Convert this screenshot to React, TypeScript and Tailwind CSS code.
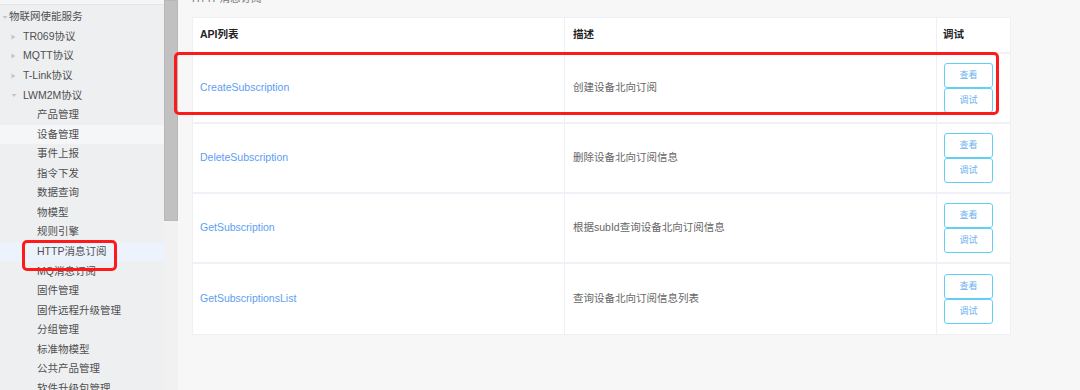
import React from "react"

const menu: { label: string; level: number; arrow?: "right" | "down"; bg?: string }[] = [
  { label: "物联网使能服务", level: 0, arrow: "down" },
  { label: "TR069协议", level: 1, arrow: "right" },
  { label: "MQTT协议", level: 1, arrow: "right" },
  { label: "T-Link协议", level: 1, arrow: "right" },
  { label: "LWM2M协议", level: 1, arrow: "down" },
  { label: "产品管理", level: 2 },
  { label: "设备管理", level: 2, bg: "bg-[#f5f6f8]" },
  { label: "事件上报", level: 2 },
  { label: "指令下发", level: 2 },
  { label: "数据查询", level: 2 },
  { label: "物模型", level: 2 },
  { label: "规则引擎", level: 2 },
  { label: "HTTP消息订阅", level: 2, bg: "bg-[#edf3fc]" },
  { label: "MQ消息订阅", level: 2 },
  { label: "固件管理", level: 2 },
  { label: "固件远程升级管理", level: 2 },
  { label: "分组管理", level: 2 },
  { label: "标准物模型", level: 2 },
  { label: "公共产品管理", level: 2 },
  { label: "软件升级包管理", level: 2 },
]

const apis = [
  { name: "CreateSubscription", desc: "创建设备北向订阅" },
  { name: "DeleteSubscription", desc: "删除设备北向订阅信息" },
  { name: "GetSubscription", desc: "根据subId查询设备北向订阅信息" },
  { name: "GetSubscriptionsList", desc: "查询设备北向订阅信息列表" },
]

function Arrow({ dir }: { dir: "right" | "down" }) {
  return dir === "right" ? (
    <svg width="5" height="6" viewBox="0 0 5 6" className="shrink-0">
      <path d="M0.5 0.5 L4.5 3 L0.5 5.5 Z" fill="#c4c6ca" />
    </svg>
  ) : (
    <svg width="6" height="5" viewBox="0 0 6 5" className="shrink-0">
      <path d="M0.5 1 L5.5 1 L3 4 Z" fill="#c4c6ca" />
    </svg>
  )
}

function Sidebar() {
  return (
    <div className="w-[164px] shrink-0 bg-[#eeeff1] h-[390px] overflow-hidden">
      <div className="h-[5px] bg-[#f4f5f6] border-b border-[#e3e4e6]" />
      <div className="pt-[2.5px]">
        {menu.map((m) => (
          <div
            key={m.label}
            className={`h-[19.55px] flex items-center text-[10.5px] text-[#4f4f4f] whitespace-nowrap ${m.bg ?? ""}`}
          >
            {m.level === 0 && (
              <div className="flex items-center">
                <div className="w-[9px] flex justify-center"><Arrow dir="down" /></div>
                <span>{m.label}</span>
              </div>
            )}
            {m.level === 1 && (
              <div className="flex items-center pl-[10px]">
                <div className="w-[13px] flex justify-start pl-[1px]"><Arrow dir={m.arrow!} /></div>
                <span>{m.label}</span>
              </div>
            )}
            {m.level === 2 && <span className="pl-[37px]">{m.label}</span>}
          </div>
        ))}
      </div>
    </div>
  )
}

function Scrollbar() {
  return (
    <div className="w-[14px] shrink-0 bg-[#f1f1f1] h-[390px]">
      <div className="h-[221px] bg-[#c1c1c1] border border-[#b8b8b8]" />
    </div>
  )
}

function DebugButton({ label }: { label: string }) {
  return (
    <div className="w-[49px] h-[25px] border border-[#62cff6] rounded-[3px] bg-white flex items-center justify-center text-[9px] text-[#6ab2f0]">
      {label}
    </div>
  )
}

export default function App() {
  return (
    <div
      className="relative w-[1080px] h-[390px] overflow-hidden flex bg-[#f7f7f7]"
      style={{ fontFamily: '"Liberation Sans", "Noto Sans CJK SC", sans-serif' }}
    >
      <Sidebar />
      <Scrollbar />
      <div className="flex-1 pl-[14px]">
        <div className="h-[17px] overflow-hidden">
          <div className="-mt-[9px] text-[10.5px] text-[#777]">HTTP消息订阅</div>
        </div>
        <div className="w-[819px] bg-white border border-[#eef0f5] text-[10.5px]">
          <div className="grid grid-cols-[372px_372px_74px] h-[36px] border-b-2 border-[#f0f1f6] font-bold text-[#222]">
            <div className="flex items-center pl-[7px] border-r border-[#eef0f5]">API列表</div>
            <div className="flex items-center pl-[8px] border-r border-[#eef0f5]">描述</div>
            <div className="flex items-center pl-[6px]">调试</div>
          </div>
          {apis.map((a, i) => (
            <div
              key={a.name}
              className={`grid grid-cols-[372px_372px_74px] h-[70px] ${i < apis.length - 1 ? "border-b-2 border-[#f0f1f6]" : ""}`}
            >
              <div className="flex items-center pl-[7px] border-r border-[#eef0f5] text-[#5b9ef4]">{a.name}</div>
              <div className="flex items-center pl-[8px] border-r border-[#eef0f5] text-[#666]">{a.desc}</div>
              <div className="flex flex-col justify-center pl-[7px]">
                <DebugButton label="查看" />
                <DebugButton label="调试" />
              </div>
            </div>
          ))}
        </div>
      </div>

      {/* annotation boxes */}
      <div className="absolute left-[174px] top-[52px] w-[825px] h-[63px] border-[3px] border-[#ff1a1a] rounded-[5px]" />
      <div className="absolute left-[22px] top-[240px] w-[95px] h-[31px] border-[3px] border-[#ff1a1a] rounded-[5px]" />
    </div>
  )
}
